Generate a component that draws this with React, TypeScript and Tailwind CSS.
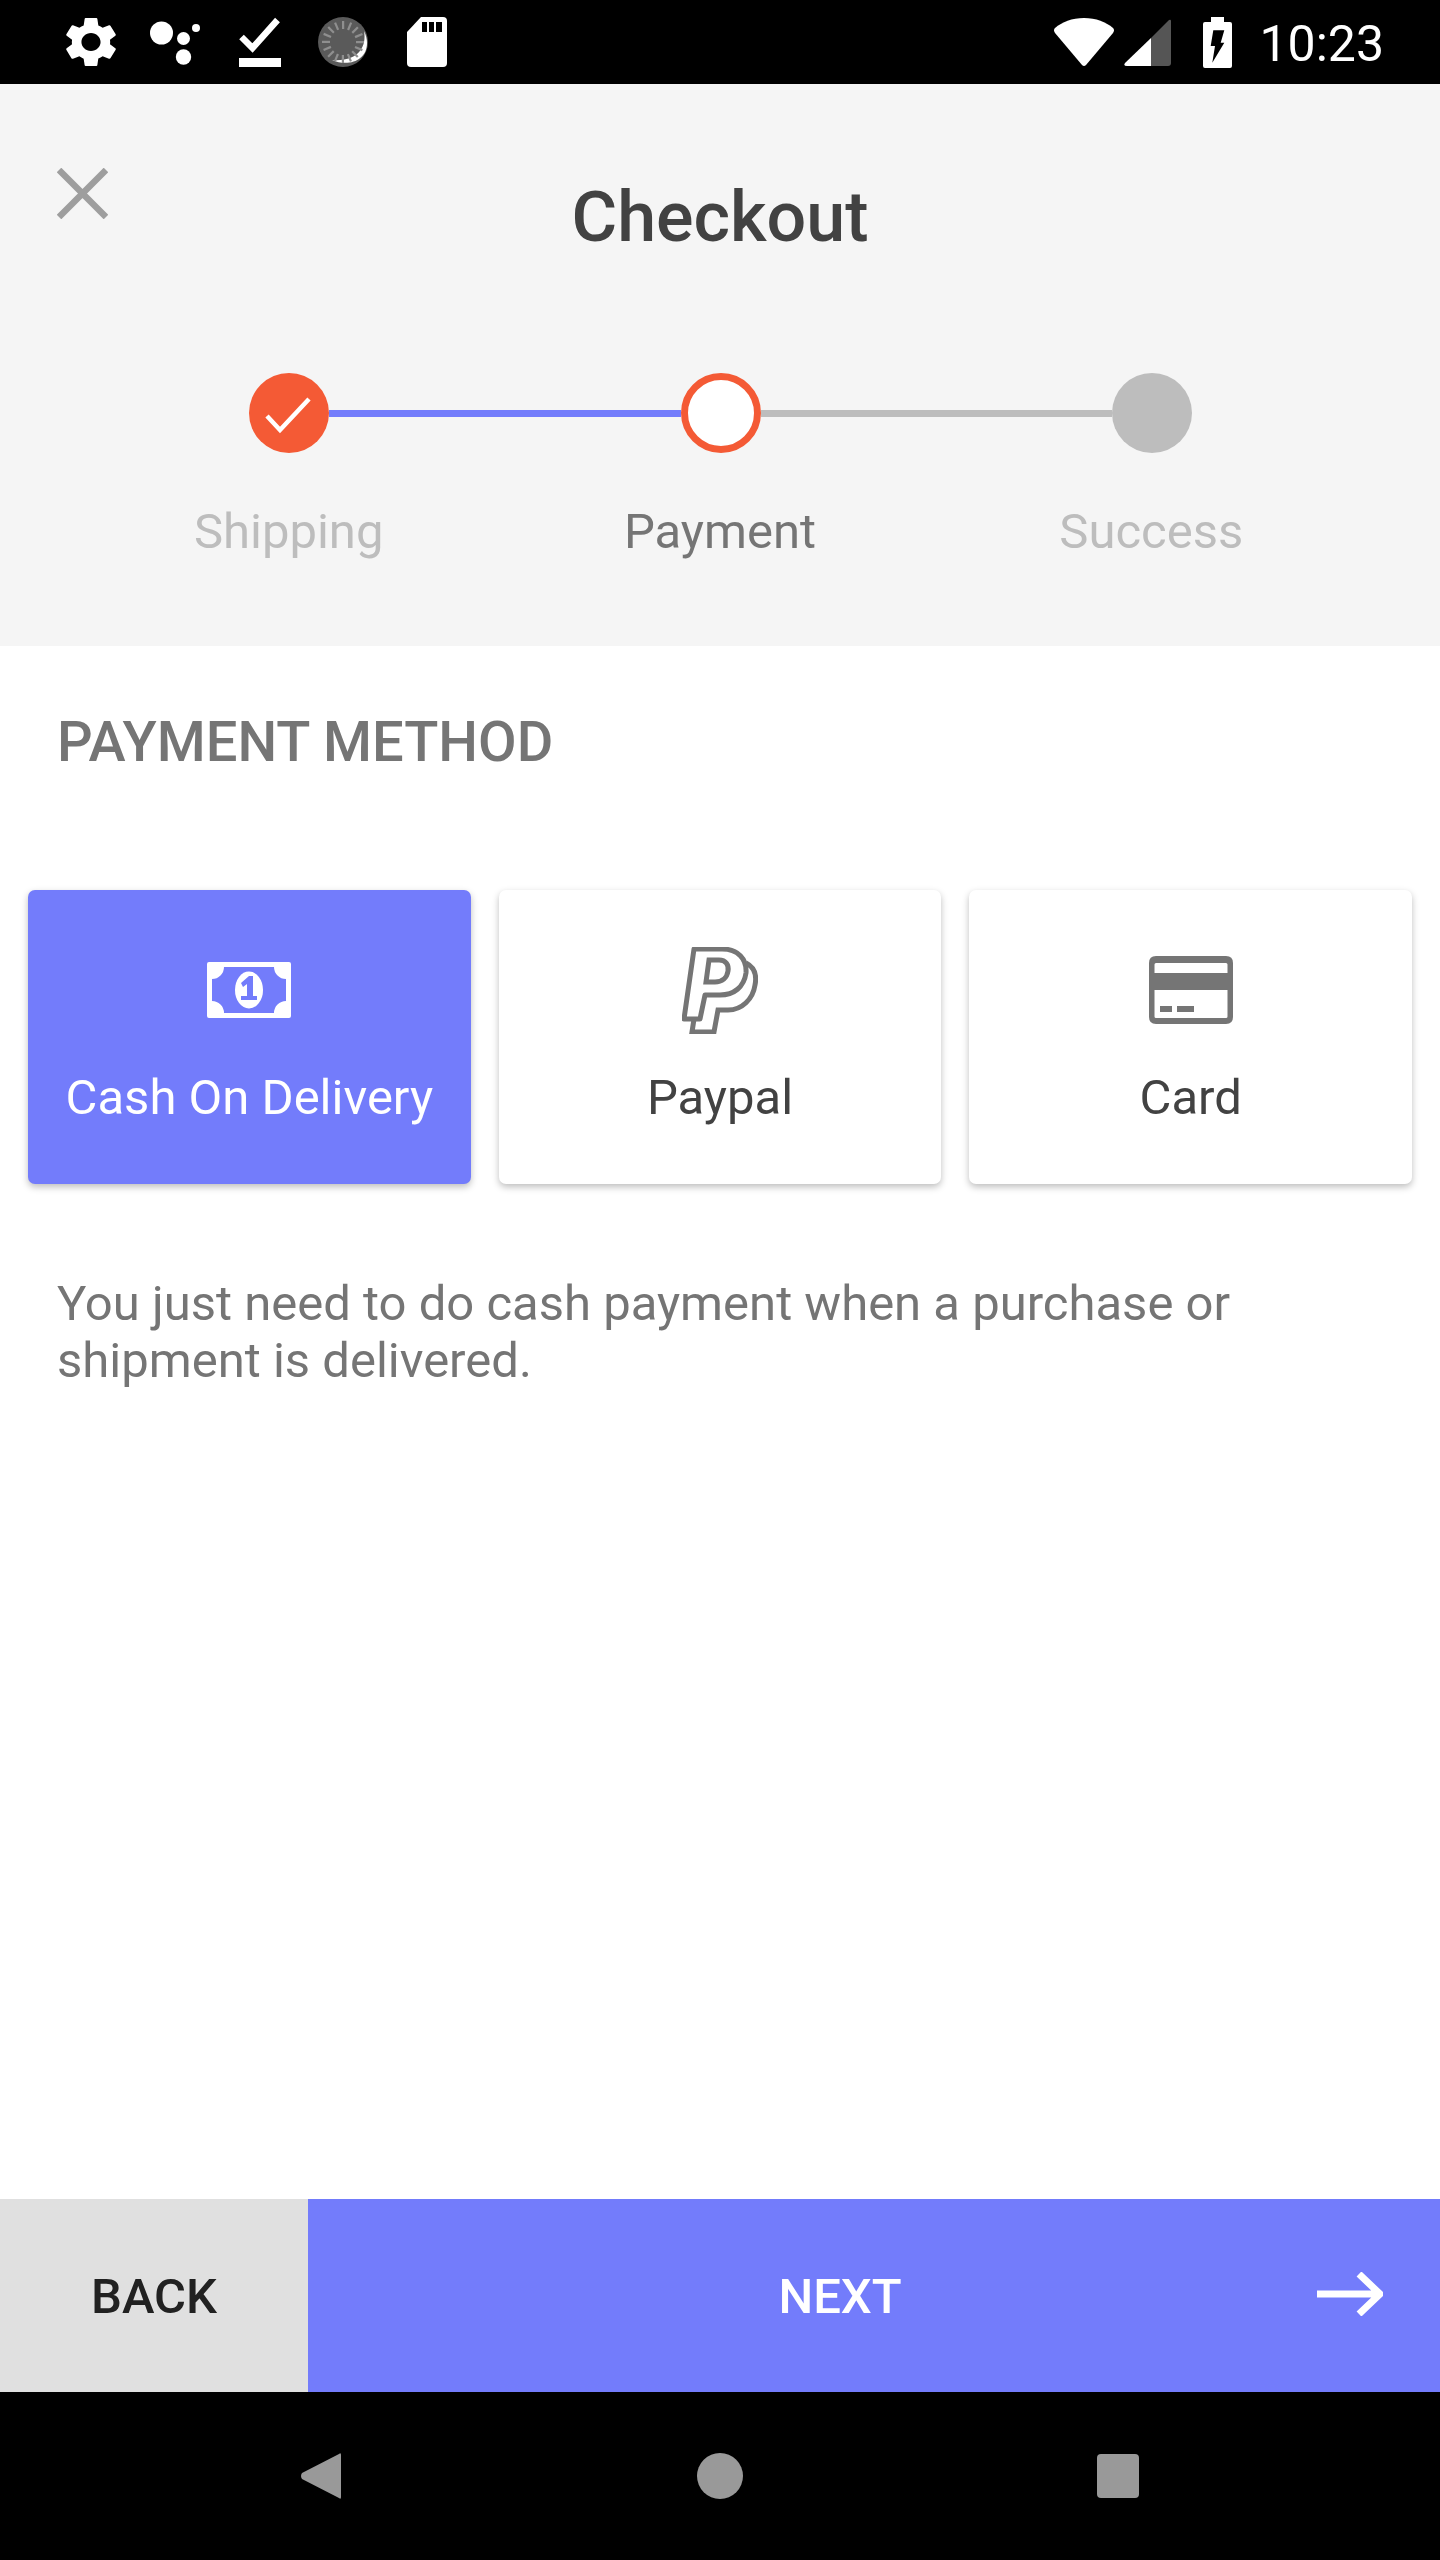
import React from "react";

const BLUE = "#737cfb";

function Gear() {
  return (
    <svg viewBox="2.6 2 18.8 20" className="w-[50px] h-[50px]" preserveAspectRatio="none">
      <path fill="#fff" fillRule="evenodd" d="M19.14 12.94c.04-.3.06-.61.06-.94 0-.32-.02-.64-.07-.94l2.03-1.58c.18-.14.23-.41.12-.61l-1.92-3.32c-.12-.22-.37-.29-.59-.22l-2.39.96c-.5-.38-1.03-.7-1.62-.94l-.36-2.54c-.04-.24-.24-.41-.48-.41h-3.84c-.24 0-.43.17-.47.41l-.36 2.54c-.59.24-1.13.57-1.62.94l-2.39-.96c-.22-.08-.47 0-.59.22L2.74 8.87c-.12.21-.08.47.12.61l2.03 1.58c-.05.3-.09.63-.09.94s.02.64.07.94l-2.03 1.58c-.18.14-.23.41-.12.61l1.92 3.32c.12.22.37.29.59.22l2.39-.96c.5.38 1.03.7 1.62.94l.36 2.54c.05.24.24.41.48.41h3.84c.24 0 .44-.17.47-.41l.36-2.54c.59-.24 1.13-.56 1.62-.94l2.39.96c.22.08.47 0 .59-.22l1.92-3.32c.12-.22.07-.47-.12-.61l-2.01-1.58zM12 15.6c-1.98 0-3.6-1.62-3.6-3.6s1.62-3.6 3.6-3.6 3.6 1.62 3.6 3.6-1.62 3.6-3.6 3.6z" />
    </svg>
  );
}

function Dots() {
  return (
    <svg viewBox="0 0 50 50" className="w-[50px] h-[50px]">
      <circle cx="11.5" cy="16" r="11.5" fill="#fff" />
      <circle cx="33.5" cy="21.5" r="6.5" fill="#fff" />
      <circle cx="33.5" cy="40" r="7.7" fill="#fff" />
      <circle cx="46" cy="11" r="4" fill="#fff" />
    </svg>
  );
}

function CheckBar() {
  return (
    <svg viewBox="0 0 42 50" className="w-[42px] h-[50px]">
      <path fill="none" stroke="#fff" strokeWidth="6.5" d="M2.5 20 L13.5 31 L38.5 3" />
      <rect x="0" y="41" width="42" height="9" fill="#fff" />
    </svg>
  );
}

function Sync() {
  const ticks = Array.from({ length: 16 }, (_, i) => (i * 360) / 16);
  return (
    <svg viewBox="0 0 50 50" className="w-[50px] h-[50px]">
      <circle cx="25" cy="25" r="25" fill="#5a5a5a" />
      <path fill="#fff" d="M46 14 C49 30 40 45 14 43 C30 50 49 44 49 26 C49 22 48 18 46 14Z" />
      {ticks.map((a) => (
        <rect key={a} x="24" y="4" width="2.2" height="8" fill="#8f8f8f" transform={`rotate(${a} 25 25)`} />
      ))}
    </svg>
  );
}

function SdCard() {
  return (
    <svg viewBox="0 0 40 50" className="w-[40px] h-[50px]">
      <path fill="#fff" d="M14 0 H36 Q40 0 40 4 V46 Q40 50 36 50 H4 Q0 50 0 46 V15 Z" />
      <rect x="15" y="5" width="5" height="10" fill="#000" />
      <rect x="22" y="5" width="5" height="10" fill="#000" />
      <rect x="29" y="5" width="6" height="10" fill="#000" />
    </svg>
  );
}

function Wifi() {
  return (
    <svg viewBox="0 0 60 48" className="w-[60px] h-[48px]">
      <path fill="#fff" d="M30 0 C18 0 8 4 1 10 Q-1 12 1 15 L28 47 Q30 49 32 47 L59 15 Q61 12 59 10 C52 4 42 0 30 0Z" />
    </svg>
  );
}

function Signal() {
  return (
    <svg viewBox="0 0 47 47" className="w-[47px] h-[47px]">
      <path fill="#555" d="M27 19 L45 1 Q47 0 47 2 V44 Q47 47 44 47 H27 Z" />
      <path fill="#fff" d="M27 19 V47 H3 Q-1 47 1 44 Z" />
    </svg>
  );
}

function Battery() {
  return (
    <svg viewBox="0 0 29 51" className="w-[29px] h-[51px]">
      <path fill="#fff" d="M8 0 H21 V5 H27 Q29 5 29 7 V49 Q29 51 27 51 H2 Q0 51 0 49 V7 Q0 5 2 5 H8 Z" />
      <path fill="#000" d="M10.3 13.3 H21.3 L17.7 25.7 H21.3 L9.3 45.7 L12 29 H7.7 Z" />
    </svg>
  );
}

function Close() {
  return (
    <svg viewBox="0 0 51 51" className="w-[51px] h-[51px]">
      <path d="M2 2 L49 49 M49 2 L2 49" stroke="#9e9e9e" strokeWidth="6.5" fill="none" />
    </svg>
  );
}

function Check() {
  return (
    <svg viewBox="0 0 80 80" className="w-[80px] h-[80px]">
      <path d="M18 43 L31 57 L60 26" stroke="#fff" strokeWidth="4.5" fill="none" />
    </svg>
  );
}

function Cash() {
  return (
    <svg viewBox="0 0 84 56" className="w-[84px] h-[56px]">
      <path
        fillRule="evenodd"
        fill="#fff"
        d="M2 0 H82 Q84 0 84 2 V54 Q84 56 82 56 H2 Q0 56 0 54 V2 Q0 0 2 0Z M17 5 H67 A12 12 0 0 0 79 17 V39 A12 12 0 0 0 67 51 H17 A12 12 0 0 0 5 39 V17 A12 12 0 0 0 17 5Z"
      />
      <ellipse cx="42" cy="28" rx="14" ry="18.5" fill="#fff" />
      <path fill={BLUE} d="M34 21 L42 14 H46 V34 H50 V38 H34 V34 H40 V22 L36 25 Z" />
    </svg>
  );
}

function Paypal() {
  return (
    <svg viewBox="0 0 76 87" className="w-[76px] h-[87px]">
      <path fill="none" stroke="#757575" strokeWidth="5" d="M64 16 C72 20 75 28 73 38 C71 52 60 63 46 63 H36 L32 85 H10 L12 72" />
      <path fill="#fff" stroke="#757575" strokeWidth="5" strokeLinejoin="round" d="M2 72 L12 2 H40 C56 2 65 12 64 26 C62 40 52 48 38 48 H23 L18 72 Z" />
      <path fill="none" stroke="#757575" strokeWidth="5" d="M27 13 H37 C44 13 47 18 46 24 C45 31 40 35 33 35 H24 Z" />
    </svg>
  );
}

function CreditCard() {
  return (
    <svg viewBox="0 0 84 68" className="w-[84px] h-[68px]">
      <path
        fillRule="evenodd"
        fill="#757575"
        d="M7 0 H77 Q84 0 84 7 V61 Q84 68 77 68 H7 Q0 68 0 61 V7 Q0 0 7 0Z M7 7 Q5.5 7 5.5 8.5 V17 H78.5 V8.5 Q78.5 7 77 7Z M5.5 34 V60.5 Q5.5 62 7 62 H77 Q78.5 62 78.5 60.5 V34Z"
      />
      <rect x="11" y="50" width="12" height="6" fill="#757575" />
      <rect x="28" y="50" width="17" height="6" fill="#757575" />
    </svg>
  );
}

function Arrow() {
  return (
    <svg viewBox="0 0 66 44" className="w-[66px] h-[44px]">
      <path d="M0 22 H62 M42 2 L63 22 L42 42" stroke="#fff" strokeWidth="7" fill="none" />
    </svg>
  );
}

function Card({ label, active, children }: { label: string; active?: boolean; children: React.ReactNode }) {
  return (
    <div
      className={`flex flex-col items-center h-[294px] pt-[57px] rounded-[7px] shadow-[0_3px_7px_rgba(0,0,0,0.26)] ${active ? "bg-[#737cfb] text-white" : "bg-white text-[#424242]"}`}
    >
      <div className="flex h-[86px] items-center justify-center">{children}</div>
      <div className="mt-[35px] text-[49px] leading-[60px]">{label}</div>
    </div>
  );
}

export default function App() {
  return (
    <div className="flex h-[2560px] w-[1440px] flex-col bg-white font-['Roboto',sans-serif]">
      <div className="flex h-[84px] shrink-0 items-center justify-between bg-black">
        <div className="flex items-center pl-[66px]">
          <Gear />
          <div className="ml-[34px]"><Dots /></div>
          <div className="ml-[39px]"><CheckBar /></div>
          <div className="ml-[37px]"><Sync /></div>
          <div className="ml-[39px]"><SdCard /></div>
        </div>
        <div className="flex items-center pr-[56px]">
          <Wifi />
          <div className="ml-[10px]"><Signal /></div>
          <div className="ml-[32px]"><Battery /></div>
          <div className="ml-[27px] mt-[3px] text-[50px] leading-[56px] text-white">10:23</div>
        </div>
      </div>

      <div className="h-[562px] shrink-0 bg-[#f5f5f5]">
        <div className="grid grid-cols-[1fr_auto_1fr] items-start px-[57px] pt-[84px]">
          <Close />
          <div className="mt-[8px] text-[70px] font-medium leading-[82px] text-[#424242]">Checkout</div>
          <div />
        </div>
        <div className="mt-[115px] flex items-center pl-[249px] pr-[248px]">
          <div className="flex h-[80px] w-[80px] shrink-0 items-center justify-center rounded-full bg-[#f45a35]">
            <Check />
          </div>
          <div className="h-[7px] flex-1 bg-[#737cfb]" />
          <div className="h-[80px] w-[80px] shrink-0 rounded-full border-[7px] border-[#f45a35] bg-white" />
          <div className="h-[7px] flex-1 bg-[#bdbdbd]" />
          <div className="h-[80px] w-[80px] shrink-0 rounded-full bg-[#bdbdbd]" />
        </div>
        <div className="mt-[49px] grid grid-cols-3 px-[73px] text-center text-[49px] leading-[60px]">
          <div className="text-[#bdbdbd]">Shipping</div>
          <div className="text-[#757575]">Payment</div>
          <div className="text-[#bdbdbd]">Success</div>
        </div>
      </div>

      <div className="flex-1">
        <div className="pl-[57px] pt-[64px] text-[56px] font-medium leading-[64px] text-[#757575]">PAYMENT METHOD</div>
        <div className="mt-[116px] grid grid-cols-3 gap-[28px] px-[28px]">
          <Card label="Cash On Delivery" active><Cash /></Card>
          <Card label="Paypal"><Paypal /></Card>
          <Card label="Card"><CreditCard /></Card>
        </div>
        <div className="mt-[91px] px-[57px] text-[49px] leading-[57px] text-[#757575]">
          You just need to do cash payment when a purchase or
          <br />
          shipment is delivered.
        </div>
      </div>

      <div className="flex h-[193px] shrink-0">
        <div className="flex w-[308px] items-center justify-center bg-[#e0e0e0] pt-[2px] text-[49px] font-medium text-[#212121]">BACK</div>
        <div className="relative flex flex-1 items-center justify-center bg-[#737cfb] pr-[68px] pt-[2px] text-[49px] font-medium text-white">
          NEXT
          <div className="absolute right-[57px] top-[73px]"><Arrow /></div>
        </div>
      </div>

      <div className="flex h-[168px] shrink-0 items-center bg-black pl-[301px]">
        <svg viewBox="0 0 40 46" className="h-[46px] w-[40px]">
          <path fill="#999" d="M40 2 Q40 -1 38 1 L1 20 Q-1 23 1 26 L38 45 Q40 47 40 44 Z" />
        </svg>
        <div className="ml-[356px] h-[46px] w-[46px] rounded-full bg-[#999]" />
        <div className="ml-[354px] h-[44px] w-[42px] rounded-[4px] bg-[#999]" />
      </div>
    </div>
  );
}
